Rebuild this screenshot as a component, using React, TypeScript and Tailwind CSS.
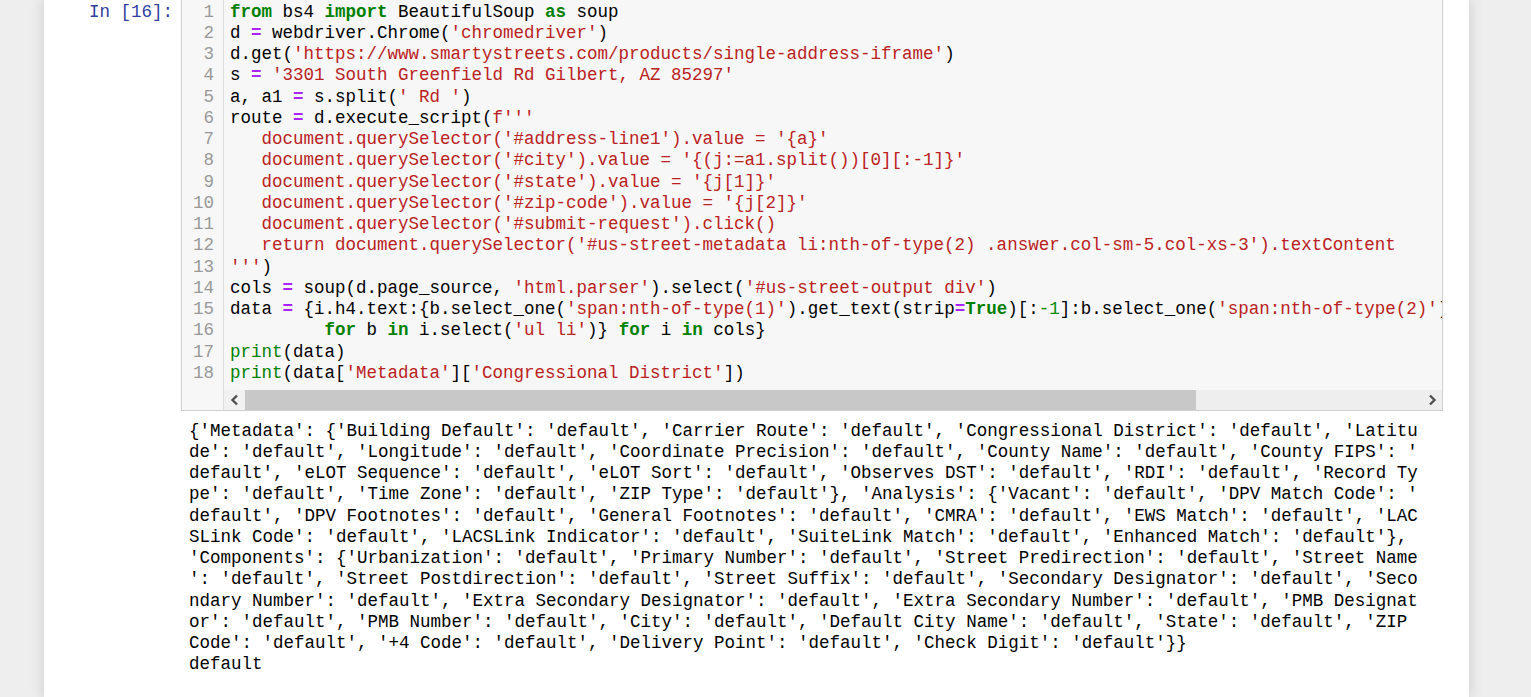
import React from "react";

type Seg = [string, string];
const K = "text-[#008000] font-bold";
const O = "text-[#aa22ff] font-bold";
const S = "text-[#ba2121]";
const N = "text-[#008800]";
const B = "text-[#008000]";
const P = "text-black";

const code: Seg[][] = [
  [[K, "from"], [P, " bs4 "], [K, "import"], [P, " BeautifulSoup "], [K, "as"], [P, " soup"]],
  [[P, "d "], [O, "="], [P, " webdriver.Chrome("], [S, "'chromedriver'"], [P, ")"]],
  [[P, "d.get("], [S, "'https://www.smartystreets.com/products/single-address-iframe'"], [P, ")"]],
  [[P, "s "], [O, "="], [P, " "], [S, "'3301 South Greenfield Rd Gilbert, AZ 85297'"]],
  [[P, "a, a1 "], [O, "="], [P, " s.split("], [S, "' Rd '"], [P, ")"]],
  [[P, "route "], [O, "="], [P, " d.execute_script("], [S, "f'''"]],
  [[S, "   document.querySelector('#address-line1').value = '{a}'"]],
  [[S, "   document.querySelector('#city').value = '{(j:=a1.split())[0][:-1]}'"]],
  [[S, "   document.querySelector('#state').value = '{j[1]}'"]],
  [[S, "   document.querySelector('#zip-code').value = '{j[2]}'"]],
  [[S, "   document.querySelector('#submit-request').click()"]],
  [[S, "   return document.querySelector('#us-street-metadata li:nth-of-type(2) .answer.col-sm-5.col-xs-3').textContent"]],
  [[S, "'''"], [P, ")"]],
  [[P, "cols "], [O, "="], [P, " soup(d.page_source, "], [S, "'html.parser'"], [P, ").select("], [S, "'#us-street-output div'"], [P, ")"]],
  [[P, "data "], [O, "="], [P, " {i.h4.text:{b.select_one("], [S, "'span:nth-of-type(1)'"], [P, ").get_text(strip"], [O, "="], [K, "True"], [P, ")[:"], [N, "-1"], [P, "]:b.select_one("], [S, "'span:nth-of-type(2)'"], [P, ")"]],
  [[P, "         "], [K, "for"], [P, " b "], [K, "in"], [P, " i.select("], [S, "'ul li'"], [P, ")} "], [K, "for"], [P, " i "], [K, "in"], [P, " cols}"]],
  [[B, "print"], [P, "(data)"]],
  [[B, "print"], [P, "(data["], [S, "'Metadata'"], [P, "]["], [S, "'Congressional District'"], [P, "])"]],
];

const out: string[] = [
  "{'Metadata': {'Building Default': 'default', 'Carrier Route': 'default', 'Congressional District': 'default', 'Latitu",
  "de': 'default', 'Longitude': 'default', 'Coordinate Precision': 'default', 'County Name': 'default', 'County FIPS': '",
  "default', 'eLOT Sequence': 'default', 'eLOT Sort': 'default', 'Observes DST': 'default', 'RDI': 'default', 'Record Ty",
  "pe': 'default', 'Time Zone': 'default', 'ZIP Type': 'default'}, 'Analysis': {'Vacant': 'default', 'DPV Match Code': '",
  "default', 'DPV Footnotes': 'default', 'General Footnotes': 'default', 'CMRA': 'default', 'EWS Match': 'default', 'LAC",
  "SLink Code': 'default', 'LACSLink Indicator': 'default', 'SuiteLink Match': 'default', 'Enhanced Match': 'default'},",
  "'Components': {'Urbanization': 'default', 'Primary Number': 'default', 'Street Predirection': 'default', 'Street Name",
  "': 'default', 'Street Postdirection': 'default', 'Street Suffix': 'default', 'Secondary Designator': 'default', 'Seco",
  "ndary Number': 'default', 'Extra Secondary Designator': 'default', 'Extra Secondary Number': 'default', 'PMB Designat",
  "or': 'default', 'PMB Number': 'default', 'City': 'default', 'Default City Name': 'default', 'State': 'default', 'ZIP",
  "Code': 'default', '+4 Code': 'default', 'Delivery Point': 'default', 'Check Digit': 'default'}}",
  "default",
];

const mono = "font-['Liberation_Mono',monospace] text-[17.5px] leading-[21.25px]";

function Chevron({ dir }: { dir: "left" | "right" }) {
  return (
    <svg width="10" height="12" viewBox="0 0 10 12">
      {dir === "left" ? (
        <path d="M7 1.5 L2.5 6 L7 10.5" fill="none" stroke="#505050" strokeWidth="2.4" />
      ) : (
        <path d="M3 1.5 L7.5 6 L3 10.5" fill="none" stroke="#505050" strokeWidth="2.4" />
      )}
    </svg>
  );
}

export default function App() {
  return (
    <div className="w-full h-[697px] bg-[#eeeeee] overflow-hidden flex">
      <div className="ml-[44px] w-[1425px] h-full bg-white shadow-[0_0_12px_1px_rgba(87,87,87,0.2)] flex flex-col">
        <div className="flex">
          <div className={`w-[137px] shrink-0 text-right pr-[8px] pt-[1.5px] text-[#303f9f] ${mono}`}>In [16]:</div>
          <div className="w-[1262px] shrink-0 flex bg-[#f7f7f7] border-x border-b border-[#cfcfcf]">
            <div className={`w-[42px] shrink-0 border-r border-[#dddddd] text-right pr-[9px] pt-[1.5px] text-[#999999] ${mono}`}>
              {code.map((_, i) => (
                <div key={i}>{i + 1}</div>
              ))}
            </div>
            <div className="flex-1 min-w-0 flex flex-col">
              <div className={`pl-[6px] pt-[1.5px] pb-[6px] overflow-hidden whitespace-pre ${mono}`}>
                {code.map((line, i) => (
                  <div key={i}>
                    {line.map(([c, t], j) => (
                      <span key={j} className={c}>
                        {t}
                      </span>
                    ))}
                  </div>
                ))}
              </div>
              <div className="h-[20px] flex items-stretch bg-[#eeeeee]">
                <div className="w-[21px] bg-[#f1f1f1] flex items-center justify-center">
                  <Chevron dir="left" />
                </div>
                <div className="w-[951px] bg-[#c8c8c8]" />
                <div className="flex-1" />
                <div className="w-[20px] flex items-center justify-center">
                  <Chevron dir="right" />
                </div>
              </div>
            </div>
          </div>
        </div>
        <div className="flex">
          <div className="w-[137px] shrink-0" />
          <div className={`pl-[8px] pt-[9.5px] whitespace-pre text-black ${mono}`}>
            {out.map((l, i) => (
              <div key={i}>{l}</div>
            ))}
          </div>
        </div>
      </div>
    </div>
  );
}
